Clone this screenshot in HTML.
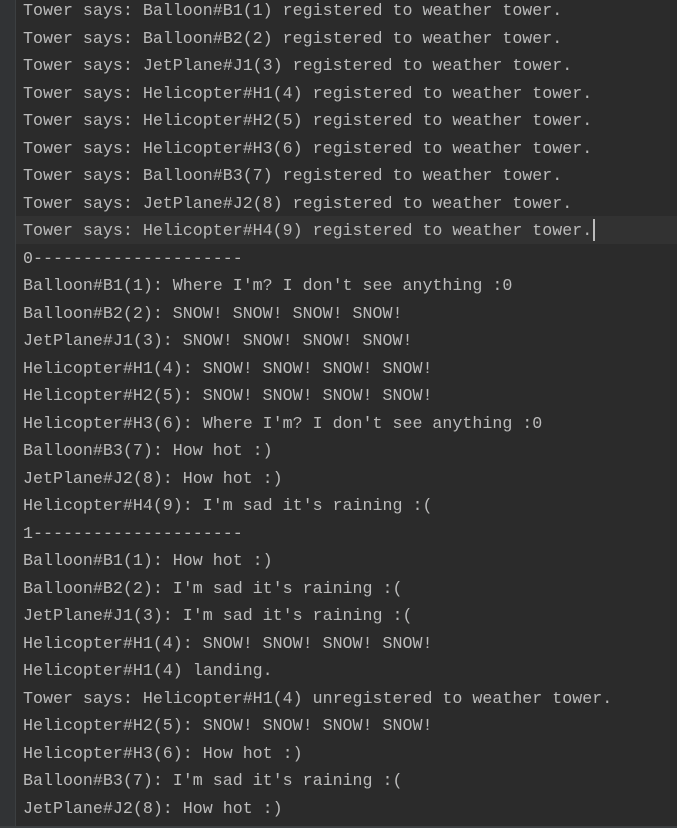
<!DOCTYPE html>
<html><head><style>
html,body{margin:0;padding:0;}
body{width:677px;height:828px;background:#2b2b2b;position:relative;overflow:hidden;}
.g{position:absolute;left:0;top:0;width:15px;height:826px;background:#313335;border-right:1px solid #3c3f41;}
.hl{position:absolute;left:16px;top:216px;width:661px;height:28px;background:#323232;}
.c{position:absolute;left:23px;top:-3px;font-family:"Liberation Mono",monospace;font-size:16.65px;line-height:27.52px;color:#bbbbbb;white-space:pre;}
.cur{position:absolute;left:593px;top:219px;width:2px;height:22px;background:#bbbbbb;}
.bb{position:absolute;left:0;top:826px;width:677px;height:2px;background:#3c3f41;}
</style></head><body>
<div class="g"></div><div class="hl"></div>
<div class="c">Tower says: Balloon#B1(1) registered to weather tower.
Tower says: Balloon#B2(2) registered to weather tower.
Tower says: JetPlane#J1(3) registered to weather tower.
Tower says: Helicopter#H1(4) registered to weather tower.
Tower says: Helicopter#H2(5) registered to weather tower.
Tower says: Helicopter#H3(6) registered to weather tower.
Tower says: Balloon#B3(7) registered to weather tower.
Tower says: JetPlane#J2(8) registered to weather tower.
Tower says: Helicopter#H4(9) registered to weather tower.
0---------------------
Balloon#B1(1): Where I'm? I don't see anything :0
Balloon#B2(2): SNOW! SNOW! SNOW! SNOW!
JetPlane#J1(3): SNOW! SNOW! SNOW! SNOW!
Helicopter#H1(4): SNOW! SNOW! SNOW! SNOW!
Helicopter#H2(5): SNOW! SNOW! SNOW! SNOW!
Helicopter#H3(6): Where I'm? I don't see anything :0
Balloon#B3(7): How hot :)
JetPlane#J2(8): How hot :)
Helicopter#H4(9): I'm sad it's raining :(
1---------------------
Balloon#B1(1): How hot :)
Balloon#B2(2): I'm sad it's raining :(
JetPlane#J1(3): I'm sad it's raining :(
Helicopter#H1(4): SNOW! SNOW! SNOW! SNOW!
Helicopter#H1(4) landing.
Tower says: Helicopter#H1(4) unregistered to weather tower.
Helicopter#H2(5): SNOW! SNOW! SNOW! SNOW!
Helicopter#H3(6): How hot :)
Balloon#B3(7): I'm sad it's raining :(
JetPlane#J2(8): How hot :)</div>
<div class="cur"></div><div class="bb"></div>
</body></html>
